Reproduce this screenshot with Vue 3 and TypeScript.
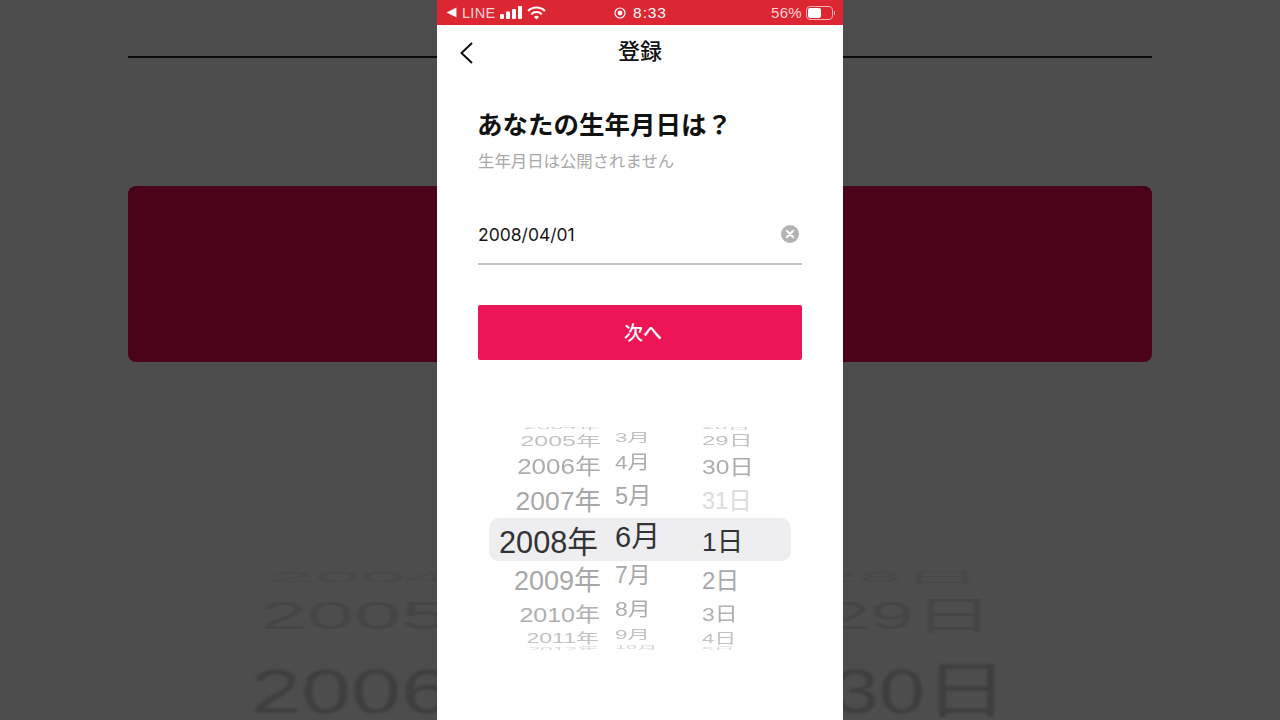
<script setup lang="ts">
interface Row { t: string; h: number; fs: number; sy: number; c: string; dx?: number }
const years: Row[] = [
  { t: '2004年', h: 4, fs: 24, sy: 0.2, c: '#cfcfcf' },
  { t: '2005年', h: 21, fs: 25, sy: 0.55, c: '#c2c2c2' },
  { t: '2006年', h: 29, fs: 26, sy: 0.85, c: '#adadad' },
  { t: '2007年', h: 39, fs: 26.5, sy: 1, c: '#a8a8a8' },
  { t: '2008年', h: 43, fs: 30.7, sy: 1, c: '#333335', dx: -3 },
  { t: '2009年', h: 35, fs: 27, sy: 1, c: '#a8a8a8' },
  { t: '2010年', h: 33, fs: 25, sy: 0.83, c: '#b0b0b0', dx: -1 },
  { t: '2011年', h: 15, fs: 23, sy: 0.6, c: '#c2c2c2', dx: -2 },
  { t: '2012年', h: 9, fs: 22, sy: 0.25, c: '#d8d8d8', dx: -2 },
]
const months: Row[] = [
  { t: '2月', h: 5, fs: 22, sy: 0.2, c: '#cfcfcf' },
  { t: '3月', h: 21, fs: 22.5, sy: 0.55, c: '#c2c2c2' },
  { t: '4月', h: 27, fs: 22.5, sy: 0.85, c: '#adadad' },
  { t: '5月', h: 39, fs: 23.5, sy: 1, c: '#a8a8a8' },
  { t: '6月', h: 41, fs: 29, sy: 1, c: '#333335' },
  { t: '7月', h: 37, fs: 23, sy: 1, c: '#a8a8a8' },
  { t: '8月', h: 33, fs: 23, sy: 0.85, c: '#adadad' },
  { t: '9月', h: 19, fs: 22.5, sy: 0.55, c: '#c2c2c2' },
  { t: '10月', h: 7, fs: 20, sy: 0.25, c: '#d8d8d8' },
]
const days: Row[] = [
  { t: '28日', h: 4, fs: 23, sy: 0.2, c: '#cfcfcf' },
  { t: '29日', h: 21, fs: 24, sy: 0.55, c: '#c2c2c2' },
  { t: '30日', h: 29, fs: 24.6, sy: 0.85, c: '#adadad' },
  { t: '31日', h: 39, fs: 23.5, sy: 1, c: '#dcdcdc' },
  { t: '1日', h: 43, fs: 26.5, sy: 1, c: '#333335' },
  { t: '2日', h: 35, fs: 24, sy: 1, c: '#a8a8a8' },
  { t: '3日', h: 33, fs: 23, sy: 0.83, c: '#b0b0b0' },
  { t: '4日', h: 15, fs: 22, sy: 0.6, c: '#c2c2c2' },
  { t: '5日', h: 9, fs: 21, sy: 0.25, c: '#d8d8d8' },
]
const columns = [
  { key: 'year', rows: years },
  { key: 'month', rows: months },
  { key: 'day', rows: days },
]
const rowStyle = (r: Row) => ({
  height: `${r.h}px`,
  fontSize: `${r.fs}px`,
  color: r.c,
  transform: `translateX(${r.dx ?? 0}px) scaleY(${r.sy})`,
})
</script>

<template>
  <div class="stage">
    <div class="backdrop">
      <div class="bd-line"></div>
      <div class="bd-card"></div>
      <div class="bd-ghost bd-g0 left">2004年</div>
      <div class="bd-ghost bd-g0 right">28日</div>
      <div class="bd-ghost bd-g1 left">2005年</div>
      <div class="bd-ghost bd-g1 right">29日</div>
      <div class="bd-ghost bd-g2 left">2006年</div>
      <div class="bd-ghost bd-g2 right">30日</div>
    </div>

    <main class="phone">
      <div class="status">
        <div class="st-left">
          <svg class="st-back" viewBox="0 0 10 10" width="11" height="11"><path d="M9.5 .5v9L.5 5z" fill="#fff" /></svg>
          <span>LINE</span>
          <svg width="22" height="13" viewBox="0 0 22 13" class="st-signal">
            <rect x="0" y="8" width="4" height="5" rx="1" />
            <rect x="6" y="5.5" width="4" height="7.5" rx="1" />
            <rect x="12" y="3" width="4" height="10" rx="1" />
            <rect x="18" y="0" width="4" height="13" rx="1" />
          </svg>
          <svg width="19" height="14" viewBox="0 0 18 13" class="st-wifi">
            <path d="M1 4.6a11.4 11.4 0 0 1 16 0" />
            <path d="M4 7.6a7.2 7.2 0 0 1 10 0" />
            <path d="M9 12.6 6.6 10.2a3.4 3.4 0 0 1 4.8 0z" class="fill" />
          </svg>
        </div>
        <div class="st-center">
          <svg width="12" height="12" viewBox="0 0 12 12"><circle cx="6" cy="6" r="5" fill="none" stroke="#fff" stroke-width="1.2" /><circle cx="6" cy="6" r="2.4" fill="#fff" /></svg>
          <span>8:33</span>
        </div>
        <div class="st-right">
          <span>56%</span>
          <div class="battery"><div class="battery-fill"></div></div>
          <div class="battery-tip"></div>
        </div>
      </div>

      <header class="nav">
        <button class="nav-back" aria-label="戻る">
          <svg width="16" height="24" viewBox="0 0 16 24"><path d="M14 2 3.5 12 14 22" fill="none" stroke="#111" stroke-width="2" /></svg>
        </button>
        <h1 class="nav-title">登録</h1>
      </header>

      <section class="form">
        <h2 class="heading">あなたの生年月日は？</h2>
        <p class="sub">生年月日は公開されません</p>
        <div class="field">
          <span class="value">2008/04/01</span>
          <svg width="18" height="18" viewBox="0 0 18 18"><circle cx="9" cy="9" r="9" fill="#b3b3b3" /><path d="M6 6l6 6M12 6l-6 6" stroke="#fff" stroke-width="2.2" stroke-linecap="round" /></svg>
        </div>
        <button class="next">次へ</button>
      </section>

      <div class="picker">
        <div class="selection"></div>
        <div v-for="col in columns" :key="col.key" class="col" :class="col.key">
          <div v-for="r in col.rows" :key="r.t" class="row" :style="rowStyle(r)">{{ r.t }}</div>
        </div>
      </div>
    </main>
  </div>
</template>

<style scoped>
.stage {
  position: relative;
  width: 1280px;
  height: 720px;
  overflow: hidden;
  background: #4d4d4d;
  display: flex;
  justify-content: center;
  font-family: "Liberation Sans", "Noto Sans CJK JP", sans-serif;
}
.backdrop {
  position: absolute;
  inset: 0;
}
.bd-line {
  position: absolute;
  left: 128px;
  top: 56px;
  width: 1024px;
  height: 2px;
  background: #0c0c0c;
}
.bd-card {
  position: absolute;
  left: 128px;
  top: 186px;
  width: 1024px;
  height: 176px;
  border-radius: 8px;
  background: #4a0318;
}
.bd-ghost {
  position: absolute;
  white-space: nowrap;
  font-size: 60px;
  line-height: 60px;
  transform-origin: 0 50%;
  filter: blur(0.9px);
}
.bd-g0 { top: 547px; transform: scale(1.35, 0.23); color: #484848; }
.bd-g1 { top: 586px; transform: scale(1.41, 0.65); color: #454545; }
.bd-g2 { top: 662px; transform: scale(1.5, 1.04); color: #3f3f3f; }
.bd-g0.left { left: 270px; }
.bd-g1.left { left: 260px; }
.bd-g2.left { left: 251px; }
.bd-g0.right { left: 814px; transform: scale(1.32, 0.23); }
.bd-g1.right { left: 826px; transform: scale(1.32, 0.65); }
.bd-g2.right { left: 833px; transform: scale(1.38, 1.04); }

.phone {
  position: relative;
  width: 406px;
  height: 720px;
  background: #fff;
  display: flex;
  flex-direction: column;
}
.status {
  height: 25px;
  background: #dc2632;
  color: #fff;
  font-size: 14.5px;
  letter-spacing: 0.3px;
  display: grid;
  grid-template-columns: 1fr auto 1fr;
  align-items: center;
  padding: 0 8px 0 9px;
  flex: none;
}
.st-left, .st-center, .st-right { display: flex; align-items: center; }
.st-left { gap: 5px; color: #f6d5d7; }
.st-signal rect { fill: #fff; }
.st-wifi path { fill: none; stroke: #fff; stroke-width: 2; }
.st-wifi path.fill { fill: #fff; stroke: none; }
.st-center { gap: 7px; font-size: 15.5px; letter-spacing: 0.9px; }
.st-right { justify-content: flex-end; gap: 4px; color: #f6d5d7; font-size: 15px; }
.battery {
  width: 27px;
  height: 14px;
  border: 1px solid #f0b0b4;
  border-radius: 4px;
  padding: 1px;
  box-sizing: border-box;
}
.battery-fill { width: 57%; height: 100%; background: #fff; border-radius: 2px; }
.battery-tip { width: 1px; height: 4px; background: #f0b0b4; margin-left: -3px; }

.nav {
  position: relative;
  height: 54px;
  flex: none;
  display: flex;
  align-items: center;
  justify-content: center;
}
.nav-back {
  position: absolute;
  left: 21px;
  top: 16px;
  width: 16px;
  height: 24px;
  padding: 0;
  border: 0;
  background: none;
}
.nav-title {
  margin: 0 0 1px;
  font-size: 22px;
  line-height: 28px;
  font-weight: 500;
  color: #111;
}
.form {
  padding: 27px 41px 0;
  display: flex;
  flex-direction: column;
  flex: none;
}
.heading {
  margin: 0 0 0 -1px;
  font-size: 25.5px;
  line-height: 38px;
  font-weight: 700;
  color: #111;
}
.sub {
  margin: 6px 0 0;
  font-size: 16.4px;
  line-height: 22px;
  color: #a8a8a8;
}
.field {
  margin-top: 33px;
  height: 60px;
  box-sizing: border-box;
  border-bottom: 2px solid #c4c4c4;
  display: flex;
  align-items: center;
  justify-content: space-between;
  padding: 0 3px 0 0;
}
.value {
  font-family: Inter, "Liberation Sans", sans-serif;
  font-size: 17.5px;
  color: #161616;
}
.next {
  margin-top: 40px;
  height: 55px;
  border: 0;
  border-radius: 2px;
  padding: 0 0 3px 6px;
  background: #ee1556;
  color: #fff;
  font: 500 19px "Noto Sans CJK JP", sans-serif;
}
.picker {
  position: relative;
  margin-top: 67px;
  padding: 0 40px;
  height: 223px;
  overflow: hidden;
  display: flex;
  flex: none;
}
.selection {
  position: absolute;
  left: 52px;
  right: 52px;
  top: 91px;
  height: 43px;
  border-radius: 10px;
  background: #eeeef0;
}
.col { position: relative; display: flex; flex-direction: column; }
.col.year { width: 124px; align-items: flex-end; margin-top: -2px; }
.col.month { width: 80px; margin-left: 14px; margin-top: -6px; }
.col.day { width: 80px; margin-left: 7px; margin-top: -2px; }
.row {
  display: flex;
  align-items: center;
  justify-content: flex-start;
  white-space: nowrap;
  flex: none;
}
</style>
